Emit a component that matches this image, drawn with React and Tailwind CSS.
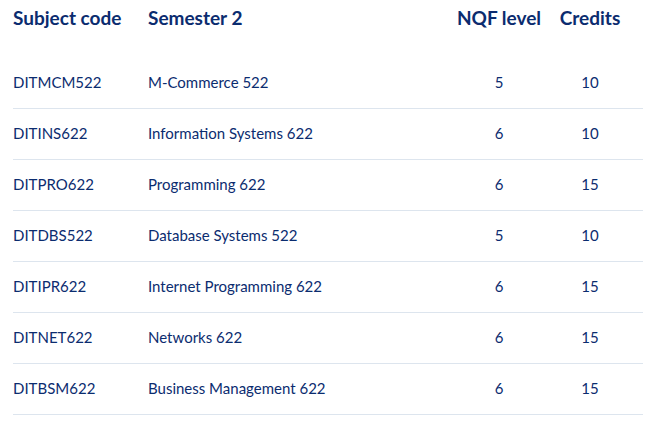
const rows = [
    ["DITMCM522", "M-Commerce 522", 5, 10],
    ["DITINS622", "Information Systems 622", 6, 10],
    ["DITPRO622", "Programming 622", 6, 15],
    ["DITDBS522", "Database Systems 522", 5, 10],
    ["DITIPR622", "Internet Programming 622", 6, 15],
    ["DITNET622", "Networks 622", 6, 15],
    ["DITBSM622", "Business Management 622", 6, 15],
];

const cols = "grid grid-cols-[135px_1fr_92px_90px] pr-[8px]";

export default function App() {
    return (
        <div className="w-[656px] h-[426px] bg-white px-[13px] text-[#0b2c6f] font-['Lato','Liberation_Sans',sans-serif]">
            <div className={`${cols} h-[36px] items-center text-[19px] font-bold`}>
                <div>Subject code</div>
                <div>Semester 2</div>
                <div className="text-center">NQF level</div>
                <div className="text-center">Credits</div>
            </div>
            <div className="mt-[22px]">
                {rows.map((r) => (
                    <div
                        key={r[0]}
                        className={`${cols} h-[51px] items-center border-b border-[#dde5ee] text-[15px] pb-[1px]`}
                    >
                        <div>{r[0]}</div>
                        <div>{r[1]}</div>
                        <div className="text-center">{r[2]}</div>
                        <div className="text-center">{r[3]}</div>
                    </div>
                ))}
            </div>
        </div>
    );
}
